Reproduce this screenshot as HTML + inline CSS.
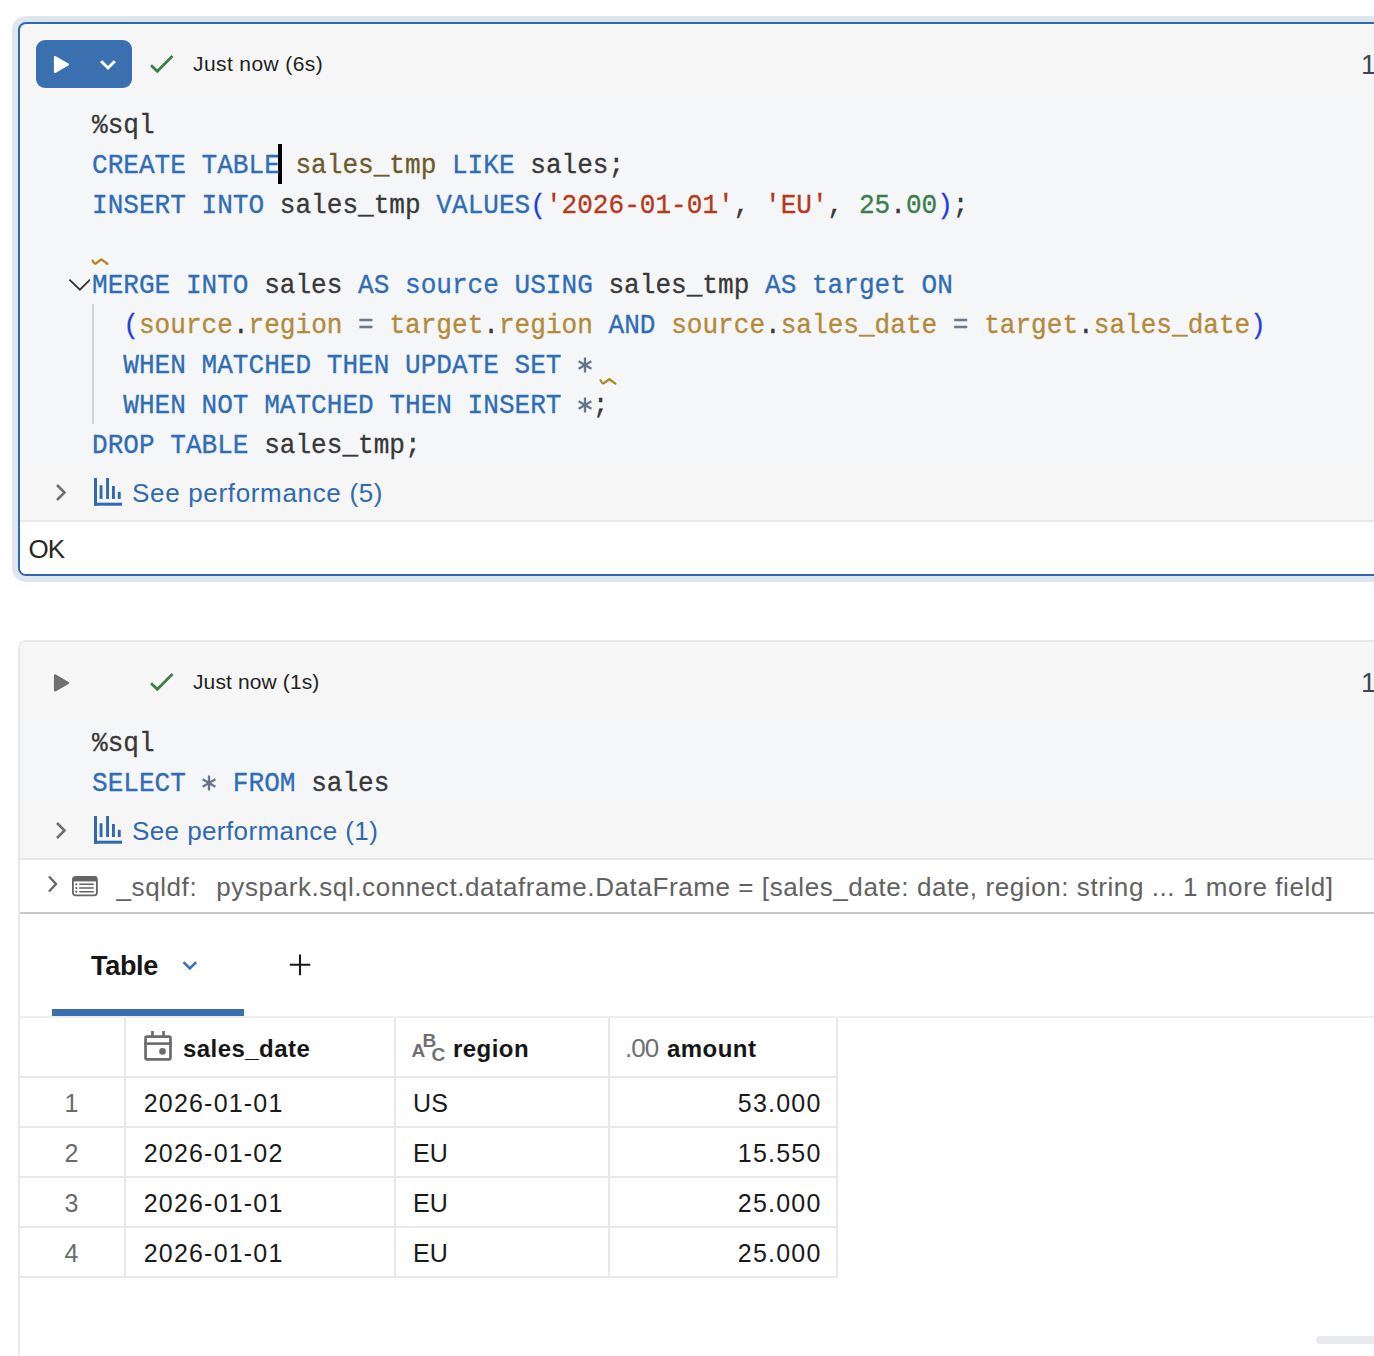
<!DOCTYPE html>
<html><head><meta charset="utf-8">
<style>
html,body{margin:0;padding:0;background:#fff;width:1374px;height:1356px;overflow:hidden;position:relative;font-family:"Liberation Sans",sans-serif;}
.abs{position:absolute;}
#c1halo{position:absolute;left:12px;top:16px;width:1400px;height:566px;background:#dfe6f1;border-radius:14px;}
#c1{position:absolute;left:18px;top:22px;width:1400px;height:550px;border:2px solid #3068ad;border-radius:8px;background:#f6f6f6;overflow:hidden;}
#c2{position:absolute;left:18px;top:640px;width:1400px;height:800px;border:2px solid #e8e8e8;border-radius:8px;background:#fff;overflow:hidden;}
.code{position:absolute;font-family:"Liberation Mono",monospace;font-size:26.09px;line-height:40px;white-space:pre;color:#333;}
.ln{position:absolute;left:0;height:40px;white-space:pre;transform:translateY(2px) scaleY(1.08);transform-origin:0 27px;}
.ln span{-webkit-text-stroke:0.3px currentColor;}
.k{color:#2f6db5}
.id{color:#383838}
.br{color:#6e5a2c}
.s{color:#b5391c}
.n{color:#3b7d4c}
.p{color:#1f3fe0}
.g{color:#b28a3a}
.op{color:#6b7a8c}
.td{font-size:25px;line-height:30px;color:#1a1a1a;letter-spacing:1.2px;white-space:nowrap;}
.th{font-size:24px;line-height:30px;font-weight:bold;color:#161616;letter-spacing:0.45px;white-space:nowrap;}
.abc{font-size:19px;line-height:20px;font-weight:bold;color:#707070;}
</style></head><body>
<div id="c1halo"></div>
<div id="c1">
  <div class="abs" style="left:0;top:80px;width:1400px;height:360px;background:#f5f6f8;"></div>
  <!-- coordinates inside c1: origin at (20,24) page -->
  <div class="abs" style="left:16px;top:16px;width:96px;height:48px;background:#3b70b0;border-radius:9px;"></div>
  <svg class="abs" style="left:16px;top:16px" width="96" height="48" viewBox="0 0 96 48">
    <path d="M19.6 16.8 Q18.5 16.2 18.5 17.7 L18.5 31.3 Q18.5 32.8 19.6 32.2 L32 25.1 Q33 24.5 32 23.9 Z" fill="#fff" stroke="#fff" stroke-width="1.2" stroke-linejoin="round"/>
    <path d="M65.2 21.2 L72 28 L78.8 21.2" fill="none" stroke="#fff" stroke-width="3"/>
  </svg>
  <svg class="abs" style="left:128px;top:26.6px" width="28" height="24" viewBox="0 0 28 24">
    <path d="M3 14.3 L9.3 20.3 L24.5 5" fill="none" stroke="#3d7d47" stroke-width="2.7"/>
  </svg>
  <div class="abs" style="left:173px;top:27px;font-size:21px;line-height:26px;color:#1f1f1f;letter-spacing:0.4px;">Just now (6s)</div>
  <div class="abs" style="left:1341px;top:26px;font-size:27px;line-height:30px;color:#3a4656;">1</div>
  <svg class="abs" style="left:44px;top:250px" width="26" height="20" viewBox="0 0 26 20">
    <path d="M5.4 5.7 L15.9 15.7 L26.1 5.7" fill="none" stroke="#333" stroke-width="1.8"/>
  </svg>
  <svg class="abs" style="left:70px;top:232px" width="20" height="10" viewBox="0 0 20 10">
    <path d="M2.6 4.6 Q4 7.8 5.6 7.6 L11.3 3.4 L17.4 7.8" fill="none" stroke="#b5841b" stroke-width="2.3" stroke-linejoin="round" stroke-linecap="round"/>
  </svg>
  <svg class="abs" style="left:578px;top:350px" width="20" height="14" viewBox="0 0 20 14">
    <path d="M2.6 6.4 Q4 9.6 5.6 9.4 L11.3 5.2 L17.4 9.6" fill="none" stroke="#b5841b" stroke-width="2.3" stroke-linejoin="round" stroke-linecap="round"/>
  </svg>
  <div class="abs" style="left:258px;top:120px;width:4px;height:40px;background:#000;"></div>
  <div class="abs" style="left:72px;top:280px;width:2px;height:120px;background:#d4d4d4;"></div>
    <svg class="abs" style="left:555.1px;top:330.8px" width="20" height="20" viewBox="0 0 20 20"><path d="M10 2.6 V17.4 M3.6 6.3 L16.4 13.7 M3.6 13.7 L16.4 6.3" stroke="#66768a" stroke-width="2.3" fill="none"/></svg>
  <svg class="abs" style="left:555.1px;top:370.8px" width="20" height="20" viewBox="0 0 20 20"><path d="M10 2.6 V17.4 M3.6 6.3 L16.4 13.7 M3.6 13.7 L16.4 6.3" stroke="#66768a" stroke-width="2.3" fill="none"/></svg>
<div class="code" style="left:72px;top:80px;">
<div class="ln" style="top:0"><span class="id">%sql</span></div>
<div class="ln" style="top:40px"><span class="k">CREATE TABLE</span> <span class="br">sales_tmp</span> <span class="k">LIKE</span> <span class="id">sales;</span></div>
<div class="ln" style="top:80px"><span class="k">INSERT INTO</span> <span class="id">sales_tmp</span> <span class="k">VALUES</span><span class="p">(</span><span class="s">'2026-01-01'</span><span class="id">, </span><span class="s">'EU'</span><span class="id">, </span><span class="n">25</span><span class="id">.</span><span class="n">00</span><span class="p">)</span><span class="id">;</span></div>
<div class="ln" style="top:160px"><span class="k">MERGE INTO</span> <span class="id">sales</span> <span class="k">AS source USING</span> <span class="id">sales_tmp</span> <span class="k">AS target ON</span></div>
<div class="ln" style="top:200px">  <span class="p">(</span><span class="g">source</span><span class="id">.</span><span class="g">region</span> <span class="op">=</span> <span class="g">target</span><span class="id">.</span><span class="g">region</span> <span class="k">AND</span> <span class="g">source</span><span class="id">.</span><span class="g">sales_date</span> <span class="op">=</span> <span class="g">target</span><span class="id">.</span><span class="g">sales_date</span><span class="p">)</span></div>
<div class="ln" style="top:240px">  <span class="k">WHEN MATCHED THEN UPDATE SET</span>  </div>
<div class="ln" style="top:280px">  <span class="k">WHEN NOT MATCHED THEN INSERT</span>  <span class="id">;</span></div>
<div class="ln" style="top:320px"><span class="k">DROP TABLE</span> <span class="id">sales_tmp;</span></div>
  </div>
  <svg class="abs" style="left:30px;top:456px" width="20" height="24" viewBox="0 0 20 24">
    <path d="M7 5 L14.5 12.5 L7 20" fill="none" stroke="#6f6f6f" stroke-width="2.6"/>
  </svg>
  <svg class="abs" style="left:74px;top:454px" width="30" height="30" viewBox="0 0 30 30" fill="#3069b0">
    <rect x="0" y="0" width="3" height="27.7"/><rect x="0" y="24.7" width="28" height="3"/>
    <rect x="5.6" y="7.3" width="2.9" height="13.7"/><rect x="12.1" y="0" width="2.9" height="21"/>
    <rect x="18" y="8" width="2.9" height="13"/><rect x="23.8" y="13.8" width="2.9" height="7.2"/>
  </svg>
  <div class="abs" style="left:112px;top:454px;font-size:26px;line-height:30px;color:#3069b0;letter-spacing:0.67px;white-space:nowrap;">See performance (5)</div>
  <div class="abs" style="left:0;top:496px;width:1400px;height:2px;background:#e8e8e8;"></div>
  <div class="abs" style="left:0;top:498px;width:1400px;height:60px;background:#fff;"></div>
  <div class="abs" style="left:8.6px;top:508.5px;font-size:26px;line-height:32px;color:#262626;letter-spacing:-1px;">OK</div>
</div>
<div id="c2">
  <div class="abs" style="left:0;top:0;width:1400px;height:216px;background:#f6f6f6;"></div>
  <div class="abs" style="left:0;top:80px;width:1400px;height:80px;background:#f5f6f8;"></div>
  <div class="abs" style="left:0;top:216px;width:1400px;height:2px;background:#e8e8e8;"></div>
  <div class="abs" style="left:0;top:270px;width:1400px;height:2px;background:#c8c8c8;"></div>
  <svg class="abs" style="left:30px;top:28px" width="24" height="24" viewBox="0 0 24 24">
    <path d="M5.6 5.1 Q4.5 4.5 4.5 6 L4.5 19.8 Q4.5 21.3 5.6 20.7 L18.2 13.6 Q19.2 13 18.2 12.4 Z" fill="#6f6f6f" stroke="#6f6f6f" stroke-width="1.2" stroke-linejoin="round"/>
  </svg>
  <svg class="abs" style="left:128px;top:26.6px" width="28" height="24" viewBox="0 0 28 24">
    <path d="M3 14.3 L9.3 20.3 L24.5 5" fill="none" stroke="#3d7d47" stroke-width="2.7"/>
  </svg>
  <div class="abs" style="left:173px;top:27px;font-size:21px;line-height:26px;color:#1f1f1f;letter-spacing:0.12px;">Just now (1s)</div>
  <div class="abs" style="left:1341px;top:26px;font-size:27px;line-height:30px;color:#3a4656;">1</div>
    <svg class="abs" style="left:179.4px;top:130.8px" width="20" height="20" viewBox="0 0 20 20"><path d="M10 2.6 V17.4 M3.6 6.3 L16.4 13.7 M3.6 13.7 L16.4 6.3" stroke="#66768a" stroke-width="2.3" fill="none"/></svg>
<div class="code" style="left:72px;top:80px;">
<div class="ln" style="top:0"><span class="id">%sql</span></div>
<div class="ln" style="top:40px"><span class="k">SELECT</span>   <span class="k">FROM</span> <span class="id">sales</span></div>
  </div>
  <svg class="abs" style="left:30px;top:176px" width="20" height="24" viewBox="0 0 20 24">
    <path d="M7 5 L14.5 12.5 L7 20" fill="none" stroke="#6f6f6f" stroke-width="2.6"/>
  </svg>
  <svg class="abs" style="left:74px;top:174px" width="30" height="30" viewBox="0 0 30 30" fill="#3069b0">
    <rect x="0" y="0" width="3" height="27.7"/><rect x="0" y="24.7" width="28" height="3"/>
    <rect x="5.6" y="7.3" width="2.9" height="13.7"/><rect x="12.1" y="0" width="2.9" height="21"/>
    <rect x="18" y="8" width="2.9" height="13"/><rect x="23.8" y="13.8" width="2.9" height="7.2"/>
  </svg>
  <div class="abs" style="left:112px;top:174px;font-size:26px;line-height:30px;color:#3069b0;letter-spacing:0.41px;white-space:nowrap;">See performance (1)</div>
  <svg class="abs" style="left:24px;top:230px" width="20" height="24" viewBox="0 0 20 24">
    <path d="M5 4.5 L12 12 L5 19.5" fill="none" stroke="#666" stroke-width="2.4"/>
  </svg>
  <svg class="abs" style="left:52px;top:233.7px" width="27" height="21" viewBox="0 0 27 21">
    <rect x="0.9" y="0.9" width="24" height="18.4" rx="2.5" fill="none" stroke="#656565" stroke-width="1.8"/>
    <rect x="0.9" y="0.9" width="24" height="4.5" fill="#656565"/>
    <circle cx="4.3" cy="8.3" r="1.1" fill="#656565"/><circle cx="4.3" cy="12" r="1.1" fill="#656565"/><circle cx="4.3" cy="15.7" r="1.1" fill="#656565"/>
    <path d="M7.9 8.3 H21.2 M7.9 12 H21.2 M7.9 15.7 H21.2" stroke="#656565" stroke-width="1.6" stroke-linecap="round"/>
  </svg>
  <div class="abs" style="left:96.5px;top:229.5px;font-size:26px;line-height:30px;color:#616161;letter-spacing:0.585px;white-space:nowrap;">_sqldf:&nbsp; <span style="margin-left:3.5px">pyspark.sql.connect.dataframe.DataFrame = [sales_date: date, region: string ... 1 more field]</span></div>
  <div class="abs" style="left:71px;top:308.7px;font-size:27px;line-height:30px;font-weight:bold;color:#161616;letter-spacing:-0.3px;">Table</div>
  <svg class="abs" style="left:158px;top:314px" width="24" height="20" viewBox="0 0 24 20">
    <path d="M5.5 6.2 L11.8 12.5 L18.1 6.2" fill="none" stroke="#3d6fb3" stroke-width="2.6"/>
  </svg>
  <svg class="abs" style="left:266px;top:309px" width="28" height="28" viewBox="0 0 28 28">
    <path d="M14 3.4 V24.3 M3.8 13.8 H24.3" fill="none" stroke="#1a1a1a" stroke-width="2.1"/>
  </svg>
  <div class="abs" style="left:32px;top:367px;width:192px;height:7px;background:#3b6db0;"></div>
  <div class="abs" style="left:0;top:374px;width:1400px;height:2px;background:#eceef1;"></div>
  <!-- table grid -->
  <div class="abs" style="left:104px;top:376px;width:2px;height:260px;background:#e8e8e8;"></div>
  <div class="abs" style="left:374px;top:376px;width:2px;height:260px;background:#e8e8e8;"></div>
  <div class="abs" style="left:588px;top:376px;width:2px;height:260px;background:#e8e8e8;"></div>
  <div class="abs" style="left:816px;top:376px;width:2px;height:260px;background:#e8e8e8;"></div>
  <div class="abs" style="left:0;top:434px;width:818px;height:2px;background:#e8e8e8;"></div>
  <div class="abs" style="left:0;top:484px;width:818px;height:2px;background:#e8e8e8;"></div>
  <div class="abs" style="left:0;top:534px;width:818px;height:2px;background:#e8e8e8;"></div>
  <div class="abs" style="left:0;top:584px;width:818px;height:2px;background:#e8e8e8;"></div>
  <div class="abs" style="left:0;top:634px;width:818px;height:2px;background:#e8e8e8;"></div>
  <!-- header -->
  <svg class="abs" style="left:122px;top:389px" width="32" height="34" viewBox="0 0 32 34">
    <rect x="3.55" y="5.55" width="24.9" height="22.8" rx="1.5" fill="none" stroke="#6b6b6b" stroke-width="2.7"/>
    <rect x="2.2" y="11.3" width="27.6" height="2.6" fill="#6b6b6b"/>
    <rect x="9.1" y="0" width="2.7" height="5" fill="#6b6b6b"/><rect x="20.2" y="0" width="2.7" height="5" fill="#6b6b6b"/>
    <circle cx="20.5" cy="20.4" r="3.3" fill="#6b6b6b"/>
  </svg>
  <div class="abs th" style="left:163px;top:392px;">sales_date</div>
  <div class="abs abc" style="left:391.5px;top:398.5px;">A</div>
  <div class="abs abc" style="left:402.5px;top:388.5px;">B</div>
  <div class="abs abc" style="left:411.5px;top:402.5px;">C</div>
  <div class="abs th" style="left:433px;top:392px;">region</div>
  <div class="abs" style="left:605px;top:391px;font-size:26px;line-height:30px;color:#6f6f6f;letter-spacing:-1px;">.00</div>
  <div class="abs th" style="left:647px;top:392px;">amount</div>
  <div class="abs td" style="left:0;width:104px;top:445.6px;text-align:center;color:#6b6b6b;">1</div>
  <div class="abs td" style="left:123.7px;top:445.6px;">2026-01-01</div>
  <div class="abs td" style="left:393px;top:445.6px;letter-spacing:0.2px;">US</div>
  <div class="abs td" style="left:588px;width:213.5px;top:445.6px;text-align:right;">53.000</div>
  <div class="abs td" style="left:0;width:104px;top:495.6px;text-align:center;color:#6b6b6b;">2</div>
  <div class="abs td" style="left:123.7px;top:495.6px;">2026-01-02</div>
  <div class="abs td" style="left:393px;top:495.6px;letter-spacing:0.2px;">EU</div>
  <div class="abs td" style="left:588px;width:213.5px;top:495.6px;text-align:right;">15.550</div>
  <div class="abs td" style="left:0;width:104px;top:545.6px;text-align:center;color:#6b6b6b;">3</div>
  <div class="abs td" style="left:123.7px;top:545.6px;">2026-01-01</div>
  <div class="abs td" style="left:393px;top:545.6px;letter-spacing:0.2px;">EU</div>
  <div class="abs td" style="left:588px;width:213.5px;top:545.6px;text-align:right;">25.000</div>
  <div class="abs td" style="left:0;width:104px;top:595.6px;text-align:center;color:#6b6b6b;">4</div>
  <div class="abs td" style="left:123.7px;top:595.6px;">2026-01-01</div>
  <div class="abs td" style="left:393px;top:595.6px;letter-spacing:0.2px;">EU</div>
  <div class="abs td" style="left:588px;width:213.5px;top:595.6px;text-align:right;">25.000</div>
</div>
<div class="abs" style="left:1316px;top:1336px;width:80px;height:8px;border-radius:4px;background:#e8eaee;"></div>
</body></html>
